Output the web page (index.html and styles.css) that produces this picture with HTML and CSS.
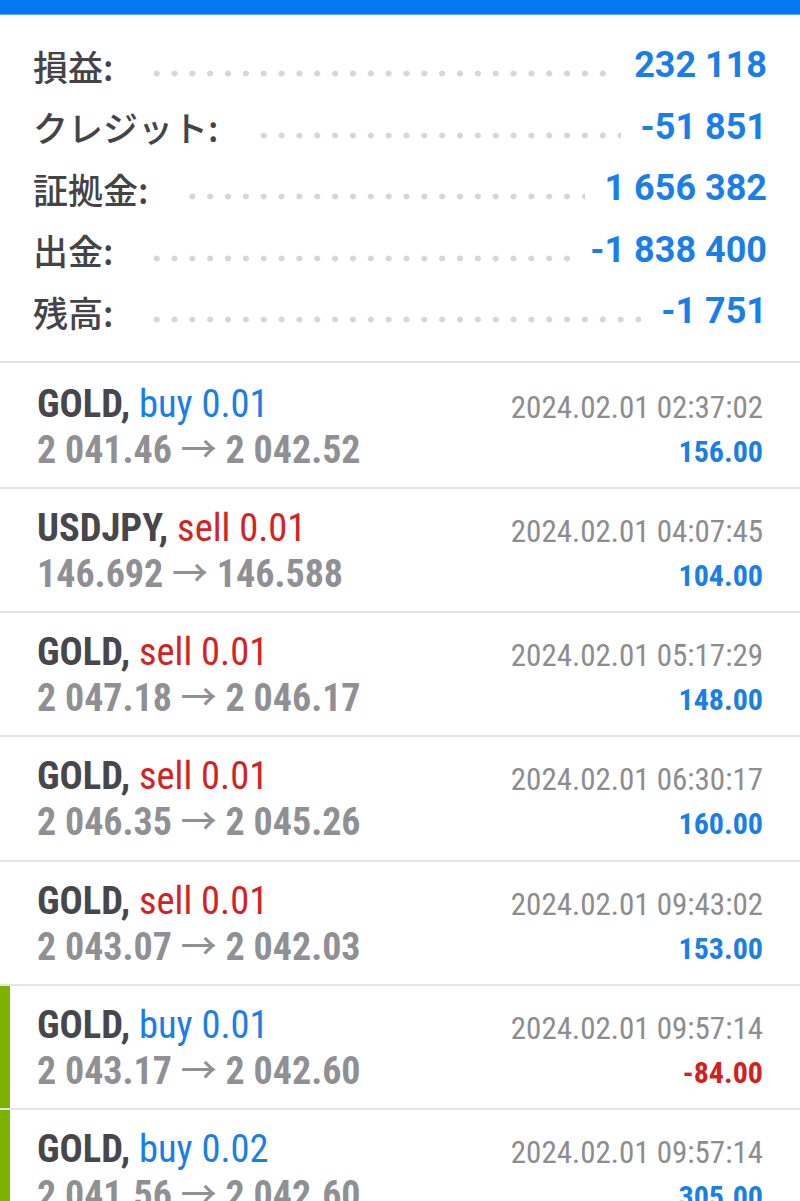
FILE: index.html
```html
<!DOCTYPE html>
<html lang="ja">
<head>
<meta charset="utf-8">
<title>履歴</title>
<link rel="stylesheet" href="styles.css">
</head>
<body>
<div class="topbar"></div>
<section class="summary">
  <div class="srow"><span class="slabel">損益:</span><span class="sval">232 118</span></div>
  <div class="srow"><span class="slabel">クレジット:</span><span class="sval">-51 851</span></div>
  <div class="srow"><span class="slabel">証拠金:</span><span class="sval">1 656 382</span></div>
  <div class="srow"><span class="slabel">出金:</span><span class="sval">-1 838 400</span></div>
  <div class="srow"><span class="slabel">残高:</span><span class="sval">-1 751</span></div>
</section>
<ul class="trades">
  <li class="trade">
    <div class="tleft">
      <div class="tline1"><span class="sym">GOLD,</span> <span class="buy">buy 0.01</span></div>
      <div class="tline2">2 041.46 <span class="arrow">→</span> 2 042.52</div>
    </div>
    <div class="tright">
      <div class="tdate">2024.02.01 02:37:02</div>
      <div class="tprofit">156.00</div>
    </div>
  </li>
  <li class="trade">
    <div class="tleft">
      <div class="tline1"><span class="sym">USDJPY,</span> <span class="sell">sell 0.01</span></div>
      <div class="tline2">146.692 <span class="arrow">→</span> 146.588</div>
    </div>
    <div class="tright">
      <div class="tdate">2024.02.01 04:07:45</div>
      <div class="tprofit">104.00</div>
    </div>
  </li>
  <li class="trade">
    <div class="tleft">
      <div class="tline1"><span class="sym">GOLD,</span> <span class="sell">sell 0.01</span></div>
      <div class="tline2">2 047.18 <span class="arrow">→</span> 2 046.17</div>
    </div>
    <div class="tright">
      <div class="tdate">2024.02.01 05:17:29</div>
      <div class="tprofit">148.00</div>
    </div>
  </li>
  <li class="trade">
    <div class="tleft">
      <div class="tline1"><span class="sym">GOLD,</span> <span class="sell">sell 0.01</span></div>
      <div class="tline2">2 046.35 <span class="arrow">→</span> 2 045.26</div>
    </div>
    <div class="tright">
      <div class="tdate">2024.02.01 06:30:17</div>
      <div class="tprofit">160.00</div>
    </div>
  </li>
  <li class="trade">
    <div class="tleft">
      <div class="tline1"><span class="sym">GOLD,</span> <span class="sell">sell 0.01</span></div>
      <div class="tline2">2 043.07 <span class="arrow">→</span> 2 042.03</div>
    </div>
    <div class="tright">
      <div class="tdate">2024.02.01 09:43:02</div>
      <div class="tprofit">153.00</div>
    </div>
  </li>
  <li class="trade open">
    <div class="tleft">
      <div class="tline1"><span class="sym">GOLD,</span> <span class="buy">buy 0.01</span></div>
      <div class="tline2">2 043.17 <span class="arrow">→</span> 2 042.60</div>
    </div>
    <div class="tright">
      <div class="tdate">2024.02.01 09:57:14</div>
      <div class="tprofit loss">-84.00</div>
    </div>
  </li>
  <li class="trade open">
    <div class="tleft">
      <div class="tline1"><span class="sym">GOLD,</span> <span class="buy">buy 0.02</span></div>
      <div class="tline2">2 041.56 <span class="arrow">→</span> 2 042.60</div>
    </div>
    <div class="tright">
      <div class="tdate">2024.02.01 09:57:14</div>
      <div class="tprofit">305.00</div>
    </div>
  </li>
</ul>
</body>
</html>
```

FILE: styles.css
```css
html, body {
  margin: 0;
  padding: 0;
  background: #ffffff;
}
body {
  height: 1201px;
  overflow: hidden;
  font-family: "Roboto", "Noto Sans CJK JP", sans-serif;
}
.topbar {
  height: 15px;
  background: #0679f2;
  border-bottom: 1px solid #5aa6f5;
  box-sizing: border-box;
}
.summary {
  padding: 20px 33px 18px 33px;
  border-bottom: 2px solid #e4e4e4;
}
.srow {
  height: 61.5px;
  display: flex;
  justify-content: space-between;
  align-items: center;
  background-image: radial-gradient(circle at center, #d6d6d6 2.7px, rgba(255,255,255,0) 3.3px);
  background-size: 17.85px 7px;
  background-repeat: repeat-x;
  background-position: 7.7px 35px;
}
.slabel {
  font-family: "Noto Sans CJK JP", sans-serif;
  font-size: 35px;
  font-weight: 500;
  line-height: 1.2;
  color: #444448;
  background: #ffffff;
  padding-right: 38px;
}
.sval {
  font-family: "Roboto", sans-serif;
  font-size: 36px;
  font-weight: 700;
  line-height: 1.2;
  color: #1a7ee8;
  background: #ffffff;
  padding-left: 20px;
}
.trades {
  list-style: none;
  margin: 0;
  padding: 0;
}
.trade {
  height: 122.4px;
  display: flex;
  justify-content: space-between;
  padding: 0 37px;
  border-bottom: 2px solid #e4e4e4;
  font-family: "Roboto Condensed", "Roboto", sans-serif;
}
.trade:first-child {
  height: 124px;
}
.trade:first-child .tleft {
  padding-top: 18px;
}
.trade:first-child .tright {
  padding-top: 23px;
}
.trade.open {
  box-shadow: inset 10px 0 0 #7db200;
}
.tleft {
  padding-top: 16px;
}
.tline1 {
  font-size: 38.5px;
  line-height: 46px;
  color: #46464b;
  white-space: nowrap;
}
.sym {
  font-weight: 700;
}
.buy {
  color: #1a7ee8;
}
.sell {
  color: #d42222;
}
.tline2 {
  font-size: 38px;
  line-height: 46px;
  font-weight: 700;
  color: #8f8f94;
  white-space: nowrap;
}
.arrow {
  font-family: "Noto Sans CJK JP", sans-serif;
  font-weight: 500;
  font-size: 36px;
  line-height: 1;
}
.tright {
  padding-top: 21px;
  text-align: right;
}
.tdate {
  font-size: 31px;
  line-height: 44px;
  color: #8d8d8f;
  white-space: nowrap;
}
.tprofit {
  font-size: 30px;
  line-height: 44px;
  font-weight: 700;
  color: #1a7ee8;
}
.tprofit.loss {
  color: #d21f1f;
}
```
